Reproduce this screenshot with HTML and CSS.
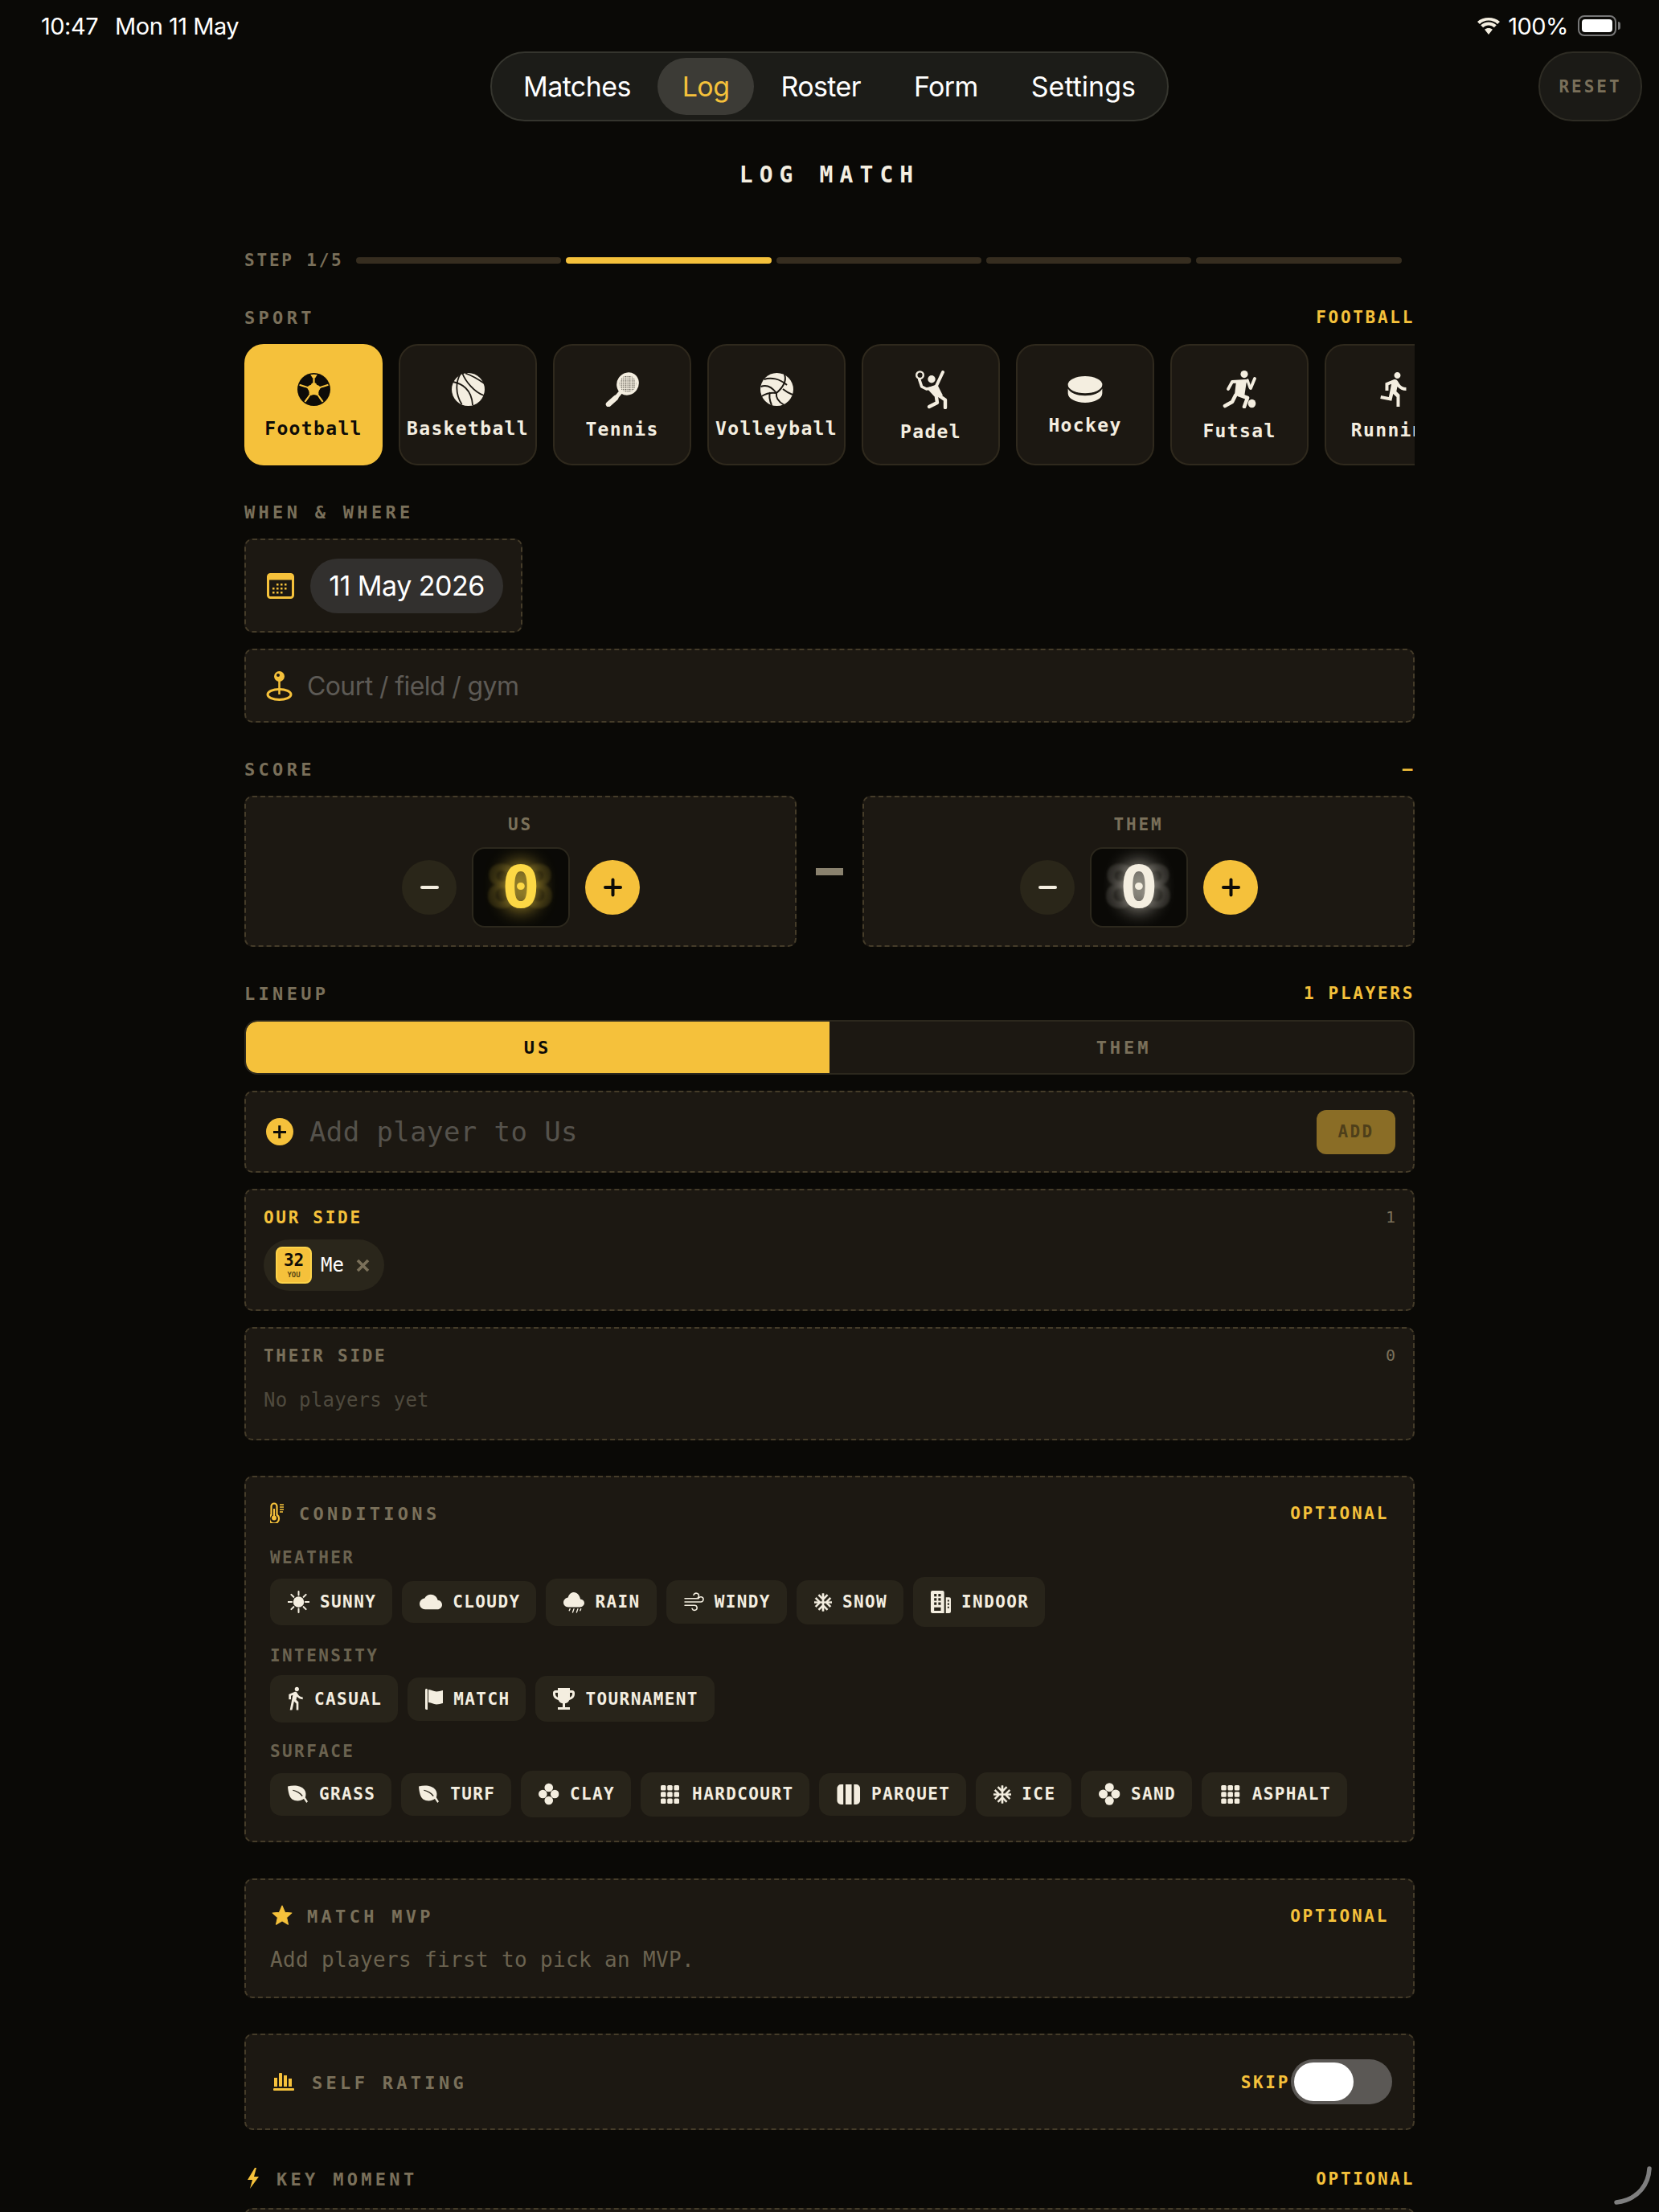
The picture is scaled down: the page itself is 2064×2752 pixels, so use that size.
FILE: index.html
```html
<!DOCTYPE html>
<html lang="en">
<head>
	<meta charset="UTF-8">
	<title>Log Match</title>
	<link rel="stylesheet" href="styles.css">
</head>
<body>
<svg class="sprite" xmlns="http://www.w3.org/2000/svg">
	<symbol id="sun" viewBox="0 0 24 24"><circle cx="12" cy="12" r="6"/><path d="M12 0.5v4M12 19.5v4M0.5 12h4M19.5 12h4M3.9 3.9l2.6 2.6M17.5 17.5l2.6 2.6M3.9 20.1l2.6-2.6M17.5 6.500l2.600-2.600" stroke="currentColor" stroke-width="1.800" stroke-linecap="round"/></symbol>
	<symbol id="cloud" viewBox="0 4 24 16"><path d="M19.350 10.040C18.670 6.590 15.640 4 12 4 9.110 4 6.600 5.640 5.350 8.040 2.340 8.360 0 10.910 0 14c0 3.310 2.690 6 6 6h13c2.760 0 5-2.240 5-5 0-2.640-2.050-4.780-4.650-4.960z"/></symbol>
	<symbol id="rain" viewBox="0 0 24 24"><path d="M19.400 8.300C18.700 4.200 15.700 0.500 12 0.500 8.800 0.500 6.200 3 5.300 6.400 2.300 6.800 0 9.300 0 12.300c0 3 2.500 5.200 5.500 5.200h13.500c2.800 0 5-2.200 5-4.700 0-2.400-2-4.300-4.600-4.500z"/><path d="M7.500 19.500l-.8 2M12 19.500l-1.400 4M16.500 19.500l-1.400 4M20 19.500l-.8 2" stroke="currentColor" stroke-width="1.300" stroke-linecap="round"/></symbol>
	<symbol id="wind" viewBox="0 0 24 24"><path d="M1 8h13.500a3.200 3.200 0 1 0-3-4.300M1 12h19a3 3 0 1 0-2.800-4M1 16h11.500a3 3 0 1 1-2.800 4" fill="none" stroke="currentColor" stroke-width="1.500" stroke-linecap="round"/></symbol>
	<symbol id="snow" viewBox="2 2 20 20"><path stroke="currentColor" stroke-width="0.400" d="M22 11h-4.170l3.240-3.240-1.410-1.420L15 11h-2V9l4.660-4.660-1.420-1.410L13 6.170V2h-2v4.170L7.760 2.930 6.340 4.340 11 9v2H9L4.340 6.340 2.930 7.760 6.170 11H2v2h4.170l-3.240 3.240 1.410 1.420L9 13h2v2l-4.660 4.660 1.420 1.410L11 17.830V22h2v-4.170l3.240 3.240 1.420-1.410L13 15v-2h2l4.660 4.660 1.410-1.420L17.830 13H22z"/></symbol>
	<symbol id="building" viewBox="0 0 24 27"><path fill-rule="evenodd" d="M2 0h12a2 2 0 0 1 2 2v25H2a2 2 0 0 1-2-2V2a2 2 0 0 1 2-2zM4 4v3h3V4zm5 0v3h3V4zM4 9v3h3V9zm5 0v3h3V9zM4 14v3h3v-3zm5 0v3h3v-3zM4 20v4h8v-4z"/><path d="M18 8h4a2 2 0 0 1 2 2v15a2 2 0 0 1-2 2h-4zM20 11v2h2v-2zM20 15v2h2v-2zM20 19v2h2v-2z" fill-rule="evenodd"/></symbol>
	<symbol id="walk" viewBox="5 1 15 23"><path d="M13.500 5.500c1.100 0 2-.9 2-2s-.9-2-2-2-2 .9-2 2 .9 2 2 2zM9.800 8.900L7 23h2.100l1.800-8 2.100 2v6h2v-7.500l-2.100-2 .6-3C14.800 12 16.800 13 19 13v-2c-1.900 0-3.500-1-4.300-2.400l-1-1.600c-.4-.6-1-1-1.700-1-.3 0-.5.1-.8.100L6 8.300V13h2V9.600l1.800-.7"/></symbol>
	<symbol id="flag" viewBox="0 0 22 26"><path d="M0 1.500C0 .7.600 0 1.500 0S3 .7 3 1.500V26H1.500C.7 26 0 25.300 0 24.500z"/><path d="M4 1c4 0 6 2.500 10 2.500 3 0 5-.9 8-1.500v16c-3 .6-5 1.500-8 1.500-4 0-6-2.500-10-2.500z"/></symbol>
	<symbol id="trophy" viewBox="3 3 18 18"><path d="M19 5h-2V3H7v2H5c-1.100 0-2 .9-2 2v1c0 2.550 1.920 4.630 4.390 4.940.63 1.500 1.980 2.630 3.610 2.960V19H7v2h10v-2h-4v-3.100c1.630-.33 2.980-1.460 3.610-2.960C19.080 12.630 21 10.550 21 8V7c0-1.100-.9-2-2-2zM5 8V7h2v3.820C5.840 10.400 5 9.300 5 8zm14 0c0 1.300-.84 2.400-2 2.820V7h2v1z"/></symbol>
	<symbol id="leaf" viewBox="0 0 25 21"><path d="M0 1c8-2 16-1 20 4 2 3 2 6 1 9l3 5-1.600 1.500-3.200-4.700c-4 3-10 3-14 .5C2 14 .5 8 0 1zm6 5c4 1 8 3 11 7l1-1c-3-4-7-6-12-7z" fill-rule="evenodd"/></symbol>
	<symbol id="flower" viewBox="0 0 24 26"><circle cx="12" cy="5.500" r="5"/><circle cx="5" cy="13" r="5"/><circle cx="19" cy="13" r="5"/><circle cx="12" cy="20.500" r="5"/></symbol>
	<symbol id="grid" viewBox="-2 -2 27 27"><rect x="0" y="0" width="6.500" height="6.500" rx="1.500"/><rect x="8.200" y="0" width="6.500" height="6.500" rx="1.500"/><rect x="16.500" y="0" width="6.500" height="6.500" rx="1.500"/><rect x="0" y="8.200" width="6.500" height="6.500" rx="1.500"/><rect x="8.200" y="8.200" width="6.500" height="6.500" rx="1.500"/><rect x="16.500" y="8.200" width="6.500" height="6.500" rx="1.500"/><rect x="0" y="16.500" width="6.500" height="6.500" rx="1.500"/><rect x="8.200" y="16.500" width="6.500" height="6.500" rx="1.500"/><rect x="16.500" y="16.500" width="6.500" height="6.500" rx="1.500"/></symbol>
	<symbol id="planks" viewBox="0 0 24 21"><path d="M4 0h2.500v21H4a4 4 0 0 1-4-4V4a4 4 0 0 1 4-4zM8.800 0h6.400v21H8.800zM17.500 0H20a4 4 0 0 1 4 4v13a4 4 0 0 1-4 4h-2.500z"/></symbol>
	<pattern id="strings" width="2.600" height="2.600" patternUnits="userSpaceOnUse"><rect width="1.200" height="1.200" fill="#1c1812"/></pattern>
</svg>

<div class="status">
	<div class="status-left"><span>10:47</span><span>Mon 11 May</span></div>
	<div class="status-right">
		<svg width="30" height="21" viewBox="0 0 30 21" fill="#fff"><path d="M15 3.500c-4.300 0-8.200 1.700-11 4.500L1 5C4.600 1.500 9.600 0 15 0s10.400 1.500 14 5l-3 3c-2.800-2.800-6.700-4.500-11-4.500z"/><path d="M15 9.500c-2.700 0-5.100 1.100-6.900 2.800l-2.900-3C7.800 6.900 11.200 5.500 15 5.500s7.200 1.400 9.800 3.800l-2.900 3c-1.800-1.700-4.200-2.800-6.900-2.800z"/><path d="M15 21l-4.900-6.300c1.300-1.100 3-1.700 4.900-1.700s3.600.6 4.900 1.700z"/></svg>
		<span>100%</span>
		<div class="battery"><div class="battery-fill"></div></div>
	</div>
</div>

<div class="topbar">
	<nav class="nav">
		<div class="nav-item">Matches</div>
		<div class="nav-item active">Log</div>
		<div class="nav-item">Roster</div>
		<div class="nav-item">Form</div>
		<div class="nav-item">Settings</div>
	</nav>
	<div class="reset">RESET</div>
</div>

<h1 class="title">LOG MATCH</h1>

<main class="page">
	<div class="step-row">
		<span class="step-text">STEP 1/5</span>
		<div class="step-bars">
			<div class="bar"></div>
			<div class="bar on"></div>
			<div class="bar"></div>
			<div class="bar"></div>
			<div class="bar"></div>
		</div>
	</div>

	<div class="head first">
		<span class="label">SPORT</span>
		<span class="tag">FOOTBALL</span>
	</div>
	<div class="sports">
		<div class="sport on">
			<svg width="41" height="41" viewBox="0 0 24 24"><circle cx="12" cy="12" r="12" fill="#0e0c08"/><circle cx="12" cy="12" r="4.800" fill="#f5c13b"/><path d="M12 12L12 1M12 12L22.500 8.600M12 12L18.500 21M12 12L5.500 21M12 12L1.500 8.600" stroke="#f5c13b" stroke-width="1.300"/><path d="M9.500 1.200h5l-1.500 2.500h-2z" fill="#f5c13b"/><circle cx="7.600" cy="5.900" r="3.400" fill="#0e0c08"/><circle cx="16.400" cy="5.900" r="3.400" fill="#0e0c08"/><circle cx="4.900" cy="14.300" r="3.700" fill="#0e0c08"/><circle cx="19.100" cy="14.300" r="3.700" fill="#0e0c08"/><circle cx="12" cy="19.500" r="3.700" fill="#0e0c08"/></svg>
			<span>Football</span>
		</div>
		<div class="sport">
			<svg width="41" height="41" viewBox="0 0 41 41"><circle cx="20.500" cy="20.500" r="20.500"/><g fill="none" stroke="#1c1812" stroke-width="1.800"><path d="M11 1C5 10 4 26 12.600 39"/><path d="M17 0.500C25 3 33 8 40.500 13"/><path d="M1.500 11C12 13 25 20 26 40"/><path d="M13.500 1C17 10 28 24 40 28"/></g></svg>
			<span>Basketball</span>
		</div>
		<div class="sport">
			<svg width="44" height="43" viewBox="0 0 44 43"><ellipse cx="29" cy="14.500" rx="13.500" ry="14.500" transform="rotate(35 29 14.500)"/><circle cx="29" cy="14.500" r="10.500" fill="url(#strings)"/><path d="M20 25l-5 6" stroke="#f4eee0" stroke-width="5"/><path d="M14 32L5 40" stroke="#f4eee0" stroke-width="6.500" stroke-linecap="round"/></svg>
			<span>Tennis</span>
		</div>
		<div class="sport">
			<svg width="41" height="41" viewBox="0 0 41 41"><circle cx="20.500" cy="20.500" r="20.500"/><g fill="none" stroke="#1c1812" stroke-width="2"><path d="M20 25C28 18 33 10 30 2"/><path d="M20 25C14 17 8 14 0.500 17"/><path d="M20 25C19 31 23 36 29 39.500"/><path d="M4.500 8C13 5 24 7 33 15"/><path d="M1.500 29C8 25 14 24 20 25"/><path d="M14 40C11 33 11 27 12 24"/><path d="M28 20C33 24 37 26 40 27"/></g></svg>
			<span>Volleyball</span>
		</div>
		<div class="sport">
			<svg width="41" height="48" viewBox="0 0 41 48"><circle cx="6.500" cy="5.700" r="4.300" fill="none" stroke="#f4eee0" stroke-width="2.400"/><circle cx="21" cy="10.700" r="4.700"/><g fill="none" stroke="#f4eee0" stroke-linecap="round" stroke-linejoin="round"><path d="M5.700 11l3 9 6 3 9-2" stroke-width="3.600"/><path d="M35 2l-8 17" stroke-width="4"/><path d="M30 31l8 5.500V46" stroke-width="4.400"/><path d="M27 33l1 7-10 5" stroke-width="4.400"/></g><path d="M15 22l13-5 7 14-9 3z"/></svg>
			<span>Padel</span>
		</div>
		<div class="sport">
			<svg width="44" height="33" viewBox="0 0 44 34"><ellipse cx="22" cy="11" rx="22" ry="11"/><path d="M0 16c3 6 12 9 22 9s19-3 22-9v6c0 7-10 12-22 12S0 29 0 22z"/></svg>
			<span>Hockey</span>
		</div>
		<div class="sport">
			<svg width="42" height="47" viewBox="0 0 42 47"><circle cx="27" cy="4.600" r="4.600"/><ellipse cx="36.500" cy="41" rx="4.800" ry="5.200"/><g fill="none" stroke="#f4eee0" stroke-linecap="round" stroke-linejoin="round"><path d="M7 23l5-9 17-1" stroke-width="3.800"/><path d="M40 10l-5 12" stroke-width="3.800"/><path d="M31 12l3 9" stroke-width="3.400"/><path d="M20 30l11 4-4 11" stroke-width="4.600"/><path d="M16 31l-4 8-9 5" stroke-width="4.600"/></g><path d="M17 13h13l-3 20-12-3z"/></svg>
			<span>Futsal</span>
		</div>
		<div class="sport">
			<svg width="35" height="45" viewBox="4 1 15 22.500"><path d="M13.490 5.480c1.100 0 2-.9 2-2s-.9-2-2-2-2 .9-2 2 .9 2 2 2zm-3.600 13.900l1-4.400 2.100 2v6h2v-7.500l-2.100-2 .6-3c1.300 1.500 3.300 2.500 5.500 2.500v-2c-1.900 0-3.500-1-4.300-2.400l-1-1.600c-.4-.6-1-1-1.700-1-.3 0-.5.1-.8.100l-5.200 2.200v4.700h2v-3.400l1.800-.7-1.600 8.100-4.900-1-.4 2 7 1.400z"/></svg>
			<span>Running</span>
		</div>
	</div>

	<div class="head">
		<span class="label">WHEN &amp; WHERE</span>
	</div>
	<div class="card date-card">
		<svg width="34" height="32" viewBox="0 0 34 32"><rect x="1.500" y="1.500" width="31" height="29" rx="3" fill="#1c1812" stroke="#f5c13b" stroke-width="3"/><rect x="1.500" y="1.500" width="31" height="7" fill="#f5c13b"/><g fill="#f5c13b"><rect x="12" y="13" width="2.500" height="2.500"/><rect x="17" y="13" width="2.500" height="2.500"/><rect x="22" y="13" width="2.500" height="2.500"/><rect x="7" y="18" width="2.500" height="2.500"/><rect x="12" y="18" width="2.500" height="2.500"/><rect x="17" y="18" width="2.500" height="2.500"/><rect x="22" y="18" width="2.500" height="2.500"/><rect x="7" y="23" width="2.500" height="2.500"/><rect x="12" y="23" width="2.500" height="2.500"/><rect x="17" y="23" width="2.500" height="2.500"/></g></svg>
		<div class="date-pill">11 May 2026</div>
	</div>
	<div class="card place-card">
		<svg width="33" height="37" viewBox="0 0 33 37"><circle cx="16.500" cy="6.500" r="6.500" fill="#f5c13b"/><circle cx="15" cy="5" r="2" fill="#1c1812"/><path d="M16.500 12v17" stroke="#f5c13b" stroke-width="2.500"/><ellipse cx="16.500" cy="29" rx="14.500" ry="6.500" fill="none" stroke="#f5c13b" stroke-width="3"/></svg>
		<span class="place-text">Court / field / gym</span>
	</div>

	<div class="head">
		<span class="label">SCORE</span>
		<span class="tag">–</span>
	</div>
	<div class="score-row">
		<div class="card score-card">
			<div class="score-name">US</div>
			<div class="score-ctl">
				<div class="round minus"></div>
				<div class="score-box us"><span class="digit">0</span></div>
				<div class="round plus"></div>
			</div>
		</div>
		<div class="score-dash"></div>
		<div class="card score-card">
			<div class="score-name">THEM</div>
			<div class="score-ctl">
				<div class="round minus"></div>
				<div class="score-box them"><span class="digit">0</span></div>
				<div class="round plus"></div>
			</div>
		</div>
	</div>

	<div class="head">
		<span class="label">LINEUP</span>
		<span class="tag">1 PLAYERS</span>
	</div>
	<div class="tabs">
		<div class="tab on">US</div>
		<div class="tab"><span class="tab-off">THEM</span></div>
	</div>
	<div class="card add-card">
		<div class="add-icon"></div>
		<span class="add-text">Add player to Us</span>
		<div class="add-btn">ADD</div>
	</div>
	<div class="card side our">
		<div class="side-head"><span class="tag">OUR SIDE</span><span class="count">1</span></div>
		<div class="player">
			<div class="jersey"><b>32</b><small>YOU</small></div>
			<span class="player-name">Me</span>
			<svg width="17" height="17" viewBox="0 0 17 17"><path d="M2 2l13 13M15 2L2 15" stroke="#7a705a" stroke-width="3.600"/></svg>
		</div>
	</div>
	<div class="card side their">
		<div class="side-head"><span class="tag muted">THEIR SIDE</span><span class="count">0</span></div>
		<div class="empty">No players yet</div>
	</div>

	<div class="card panel conditions">
		<div class="panel-head">
			<div class="panel-title">
				<svg width="20" height="26" viewBox="0 0 20 26"><path d="M5 1.500a3.500 3.500 0 0 1 3.500 3.500v10.500a6 6 0 1 1-7 0V5A3.500 3.500 0 0 1 5 1.500z" fill="none" stroke="#f5c13b" stroke-width="2.200"/><circle cx="5" cy="19.500" r="3" fill="#f5c13b"/><path d="M5 8v10" stroke="#f5c13b" stroke-width="2"/><path d="M12 3h5M12 6h5M12 9h5M12 12h4" stroke="#f5c13b" stroke-width="1.400"/></svg>
				<span class="label">CONDITIONS</span>
			</div>
			<span class="tag">OPTIONAL</span>
		</div>
		<div class="group-label">WEATHER</div>
		<div class="chips">
			<div class="chip"><svg width="27" height="30"><use href="#sun"/></svg>SUNNY</div>
			<div class="chip"><svg width="28" height="24"><use href="#cloud"/></svg>CLOUDY</div>
			<div class="chip"><svg width="26" height="31"><use href="#rain"/></svg>RAIN</div>
			<div class="chip"><svg width="25" height="26"><use href="#wind"/></svg>WINDY</div>
			<div class="chip"><svg width="22" height="27"><use href="#snow"/></svg>SNOW</div>
			<div class="chip"><svg width="25" height="34"><use href="#building"/></svg>INDOOR</div>
		</div>
		<div class="group-label">INTENSITY</div>
		<div class="chips">
			<div class="chip"><svg width="20" height="31"><use href="#walk"/></svg>CASUAL</div>
			<div class="chip"><svg width="22" height="26"><use href="#flag"/></svg>MATCH</div>
			<div class="chip"><svg width="27" height="29"><use href="#trophy"/></svg>TOURNAMENT</div>
		</div>
		<div class="group-label">SURFACE</div>
		<div class="chips">
			<div class="chip"><svg width="26" height="25"><use href="#leaf"/></svg>GRASS</div>
			<div class="chip"><svg width="26" height="25"><use href="#leaf"/></svg>TURF</div>
			<div class="chip"><svg width="25.500" height="30"><use href="#flower"/></svg>CLAY</div>
			<div class="chip"><svg width="29" height="27"><use href="#grid"/></svg>HARDCOURT</div>
			<div class="chip"><svg width="29.500" height="25"><use href="#planks"/></svg>PARQUET</div>
			<div class="chip"><svg width="22" height="27"><use href="#snow"/></svg>ICE</div>
			<div class="chip"><svg width="26.500" height="30"><use href="#flower"/></svg>SAND</div>
			<div class="chip"><svg width="27.500" height="27"><use href="#grid"/></svg>ASPHALT</div>
		</div>
	</div>

	<div class="card panel mvp">
		<div class="panel-head">
			<div class="panel-title">
				<svg width="30" height="26" viewBox="0 0 26 25"><path d="M13 1l3.400 7.800 8.100.8-6.100 5.500 1.800 8.200L13 19l-7.200 4.300 1.800-8.200L1.500 9.600l8.100-.8z" fill="#f5c13b" stroke="#f5c13b" stroke-linejoin="round"/></svg>
				<span class="label">MATCH MVP</span>
			</div>
			<span class="tag">OPTIONAL</span>
		</div>
		<div class="mvp-text">Add players first to pick an MVP.</div>
	</div>

	<div class="card rating">
		<div class="panel-title rating-title">
			<svg width="33" height="22" viewBox="0 0 33 22"><g fill="#f5c13b"><rect x="5" y="6" width="4" height="11"/><rect x="11" y="0" width="4" height="17" rx="1"/><rect x="17" y="3" width="4" height="14"/><rect x="23" y="7" width="4" height="10"/><rect x="4" y="19" width="26" height="3" rx="1"/></g></svg>
			<span class="label">SELF RATING</span>
		</div>
		<div class="rating-right">
			<span class="tag">SKIP</span>
			<div class="toggle"><div class="knob"></div></div>
		</div>
	</div>

	<div class="head key-head">
		<div class="panel-title">
			<svg width="24" height="26" viewBox="0 0 24 26"><path d="M13 0L4 15h6l-3 11 11-15h-6l3-11z" fill="#f5c13b"/></svg>
			<span class="label">KEY MOMENT</span>
		</div>
		<span class="tag">OPTIONAL</span>
	</div>
	<div class="card key-card"></div>
</main>

<svg class="pencil" width="50" height="50" viewBox="0 0 50 50"><path d="M46 4C45 22 34 42 5 46" fill="none" stroke="#7f7f7f" stroke-width="5.500" stroke-linecap="round"/></svg>
</body>
</html>
```

FILE: styles.css
```css
* {
  box-sizing: border-box;
}

html, body {
  margin: 0;
  padding: 0;
}

body {
  position: relative;
  height: 2752px;
  overflow: hidden;
  background: #0a0906;
  color: #f4eee0;
  font-family: "DejaVu Sans Mono", monospace;
  font-weight: 700;
}

svg {
  flex: none;
  fill: #f4eee0;
  display: block;
}

.sprite {
  position: absolute;
  width: 0;
  height: 0;
}

/* status bar */
.status {
  height: 64px;
  padding: 0 53px 0 51px;
  display: flex;
  justify-content: space-between;
  align-items: center;
  font-family: Inter, sans-serif;
  font-weight: 400;
  font-size: 29px;
  letter-spacing: -0.5px;
  color: #fff;
}

.status-left {
  display: flex;
  gap: 21px;
}

.status-right {
  display: flex;
  align-items: center;
  gap: 9px;
}

.battery {
  position: relative;
  width: 48px;
  height: 26px;
  margin-left: 3px;
  padding: 3px;
  border: 2px solid #777;
  border-radius: 8px;
}

.battery::after {
  content: "";
  position: absolute;
  right: -7px;
  top: 6px;
  width: 3px;
  height: 10px;
  background: #777;
  border-radius: 0 3px 3px 0;
}

.battery-fill {
  height: 100%;
  background: #fff;
  border-radius: 4px;
}

/* nav */
.topbar {
  display: grid;
  grid-template-columns: 1fr auto 1fr;
}

.nav {
  grid-column: 2;
  height: 87px;
  padding: 6px;
  display: flex;
  background: #1c1c18;
  border: 2px solid #35352e;
  border-radius: 43px;
  font-family: Inter, sans-serif;
  font-weight: 400;
  font-size: 34px;
  letter-spacing: -0.6px;
}

.nav-item {
  padding: 0 33px;
  display: flex;
  align-items: center;
  color: #fff;
  border-radius: 36px;
}

.nav-item:last-child {
  letter-spacing: 0;
}

.nav-item.active {
  padding: 0 31px;
  background: #3c3b36;
  color: #f5c13b;
}

.reset {
  grid-column: 3;
  justify-self: end;
  width: 129px;
  height: 87px;
  margin-right: 21px;
  display: flex;
  align-items: center;
  justify-content: center;
  background: #1b1a16;
  border: 2px solid #2e2c24;
  border-radius: 43px;
  color: #7a705a;
  font-size: 21px;
  letter-spacing: 3px;
}

.title {
  margin: 52px 0 0;
  height: 30px;
  line-height: 30px;
  text-align: center;
  font-size: 28px;
  letter-spacing: 8.100px;
  color: #f4eee0;
}

/* main column */
.page {
  width: 1456px;
  margin: 0 auto;
}

.step-row {
  margin-top: 79px;
  height: 24px;
  padding-right: 16px;
  display: flex;
  align-items: center;
  gap: 15px;
}

.step-text {
  font-size: 21px;
  letter-spacing: 2.800px;
  color: #7a705a;
}

.step-bars {
  flex: 1;
  display: flex;
  gap: 6px;
}

.bar {
  flex: 1;
  height: 8px;
  border-radius: 4px;
  background: #362d1f;
}

.bar.on {
  background: #f5c13b;
}

.head {
  height: 26px;
  margin-top: 44px;
  margin-bottom: 21px;
  display: flex;
  justify-content: space-between;
  align-items: center;
}

.head.first {
  margin-top: 45px;
}

.label {
  padding-top: 2px;
  font-size: 22px;
  letter-spacing: 4.300px;
  color: #7a705a;
}

.tag {
  padding-top: 2px;
  font-size: 21px;
  letter-spacing: 2.700px;
  color: #f5c13b;
}

.tag.muted {
  color: #7a705a;
}

/* sports */
.sports {
  display: flex;
  gap: 20px;
  overflow: hidden;
}

.sport {
  flex: 0 0 172px;
  height: 151px;
  display: flex;
  flex-direction: column;
  align-items: center;
  justify-content: center;
  gap: 18px;
  background: #1c1812;
  border: 2px solid #2f291d;
  border-radius: 24px;
  font-size: 23px;
  line-height: 20px;
  letter-spacing: 1.350px;
  white-space: nowrap;
}

.sport.on {
  background: #f5c13b;
  border-color: #f5c13b;
  color: #0e0c08;
}

/* shared dashed card */
.card {
  background: #1c1812;
  border: 2px dashed #453c29;
  border-radius: 10px;
}

.date-card {
  width: 346px;
  height: 117px;
  padding: 0 22px 0 26px;
  display: flex;
  align-items: center;
  gap: 20px;
}

.date-pill {
  width: 242px;
  height: 68px;
  display: flex;
  align-items: center;
  justify-content: center;
  background: #32302e;
  border-radius: 34px;
  font-family: Inter, sans-serif;
  font-weight: 400;
  font-size: 34px;
  letter-spacing: -0.5px;
  color: #fff;
}

.place-card {
  margin-top: 20px;
  height: 92px;
  padding: 0 25px;
  display: flex;
  align-items: center;
  gap: 18px;
}

.place-text {
  font-family: Inter, sans-serif;
  font-weight: 400;
  font-size: 32px;
  letter-spacing: -0.6px;
  color: #5d5a55;
}

/* score */
.score-row {
  display: flex;
  align-items: center;
}

.score-card {
  flex: 1;
  height: 188px;
  padding-top: 22px;
}

.score-dash {
  flex: 0 0 82px;
  height: 9px;
  background: linear-gradient(#8a826e, #8a826e) center / 34px 9px no-repeat;
}

.score-name {
  height: 24px;
  line-height: 24px;
  text-align: center;
  font-size: 21px;
  letter-spacing: 2.800px;
  color: #7a705a;
}

.score-ctl {
  margin-top: 16px;
  display: flex;
  justify-content: center;
  align-items: center;
  gap: 19px;
}

.round {
  position: relative;
  width: 68px;
  height: 68px;
  border-radius: 50%;
}

.round.minus {
  background: #2a2619;
}

.round.plus {
  background: #f5c13b;
}

.round::before, .round.plus::after {
  content: "";
  position: absolute;
  left: 23px;
  top: 32px;
  width: 23px;
  height: 4px;
  border-radius: 2px;
  background: #f4eee0;
}

.round.plus::before, .round.plus::after {
  background: #0e0c08;
}

.round.plus::after {
  transform: rotate(90deg);
}

.score-box {
  position: relative;
  width: 122px;
  height: 100px;
  display: flex;
  align-items: center;
  justify-content: center;
  background: #0a0906;
  border: 2px solid #2c281d;
  border-radius: 16px;
  overflow: hidden;
  font-size: 73px;
  line-height: 96px;
}

.score-box.us {
  color: #fcd845;
}

.score-box.them {
  color: #f4eee0;
}

/* dim 88 behind the digit */
.score-box::before {
  content: "88";
  position: absolute;
  left: 0;
  right: 0;
  text-align: center;
  letter-spacing: 1px;
  opacity: 0.12;
  filter: blur(1.500px);
}

.digit {
  position: relative;
  transform: scaleX(1.1);
  text-shadow: 0 0 22px currentColor;
}

/* lineup */
.tabs {
  height: 68px;
  display: flex;
  background: #1c1812;
  border: 2px solid #2c281d;
  border-radius: 16px;
  overflow: hidden;
  font-size: 22px;
  letter-spacing: 3.900px;
}

.tab {
  flex: 1 1 0;
  min-width: 0;
  display: flex;
  align-items: center;
  justify-content: center;
  color: #7a705a;
}

.tab-off {
  margin-left: 6px;
}

.tab.on {
  background: #f5c13b;
  color: #0e0c08;
  border-radius: 14px 0 0 14px;
}

.add-card {
  margin-top: 20px;
  height: 102px;
  padding: 0 22px 0 25px;
  display: flex;
  align-items: center;
  gap: 20px;
}

.add-icon {
  position: relative;
  width: 34px;
  height: 34px;
  border-radius: 50%;
  background: #f5c13b;
}

.add-icon::before, .add-icon::after {
  content: "";
  position: absolute;
  left: 9px;
  top: 16px;
  width: 16px;
  height: 2.500px;
  background: #0e0c08;
}

.add-icon::after {
  transform: rotate(90deg);
}

.add-text {
  flex: 1;
  font-weight: 400;
  font-size: 34px;
  letter-spacing: 0.400px;
  color: #55524c;
}

.add-btn {
  width: 98px;
  height: 55px;
  display: flex;
  align-items: center;
  justify-content: center;
  background: #8a6d26;
  border-radius: 12px;
  color: #4e3f1a;
  font-size: 21px;
  letter-spacing: 2.400px;
}

.side {
  margin-top: 20px;
  padding: 22px 22px 0;
}

.side.our {
  height: 152px;
}

.side.their {
  height: 141px;
}

.side-head {
  height: 22px;
  display: flex;
  justify-content: space-between;
  align-items: center;
}

.count {
  font-weight: 400;
  font-size: 20px;
  color: #7a705a;
}

.player {
  margin-top: 17px;
  width: 150px;
  height: 64px;
  padding: 0 18px 0 15px;
  display: flex;
  align-items: center;
  background: #2a261b;
  border-radius: 32px;
}

.jersey {
  width: 46px;
  height: 46px;
  display: flex;
  flex-direction: column;
  align-items: center;
  justify-content: center;
  background: #f5c13b;
  border: 2px solid #fdd44a;
  border-radius: 8px;
  color: #0e0c08;
  line-height: 1;
}

.jersey b {
  font-size: 21px;
}

.jersey small {
  margin-top: 3px;
  font-size: 9px;
  color: #5c4a14;
}

.player-name {
  margin: 0 15px 0 11px;
  font-weight: 400;
  font-size: 24px;
  color: #fff;
}

.empty {
  margin-top: 30px;
  height: 30px;
  line-height: 30px;
  font-weight: 400;
  font-size: 24px;
  letter-spacing: 0.250px;
  color: #4f4a3e;
}

/* panels */
.panel {
  padding: 29px 30px 0;
}

.conditions {
  margin-top: 44px;
  height: 456px;
}

.mvp {
  margin-top: 45px;
  height: 149px;
}

.panel-head {
  height: 30px;
  display: flex;
  justify-content: space-between;
  align-items: center;
}

.panel-title {
  display: flex;
  align-items: center;
  gap: 16px;
}

.group-label {
  margin-top: 24px;
  height: 24px;
  line-height: 24px;
  font-size: 21px;
  letter-spacing: 2.400px;
  color: #6b6350;
}

.panel-head + .group-label {
  margin-top: 29px;
}

.chips {
  margin-top: 12px;
  display: flex;
  align-items: center;
  gap: 12px;
}

.chip {
  padding: 14px 20px 14px 22px;
  display: flex;
  align-items: center;
  gap: 13px;
  background: #28241a;
  border-radius: 14px;
  font-size: 21px;
  line-height: 24px;
  letter-spacing: 1.400px;
  white-space: nowrap;
}

.mvp-text {
  margin-top: 22px;
  height: 36px;
  line-height: 36px;
  font-weight: 400;
  font-size: 26px;
  letter-spacing: 0.350px;
  color: #6b6350;
}

.rating {
  margin-top: 44px;
  height: 120px;
  padding: 0 26px 0 30px;
  display: flex;
  justify-content: space-between;
  align-items: center;
}

.rating-title {
  gap: 19px;
}

.rating-right {
  display: flex;
  align-items: center;
  gap: 1px;
}

.toggle {
  width: 126px;
  height: 56px;
  padding: 4px;
  background: #5b5855;
  border-radius: 28px;
}

.knob {
  width: 74px;
  height: 48px;
  background: #fff;
  border-radius: 24px;
}

.key-head {
  margin-top: 47px;
  margin-bottom: 24px;
}

.key-card {
  height: 200px;
}

.pencil {
  position: absolute;
  right: 8px;
  bottom: 8px;
}
```
